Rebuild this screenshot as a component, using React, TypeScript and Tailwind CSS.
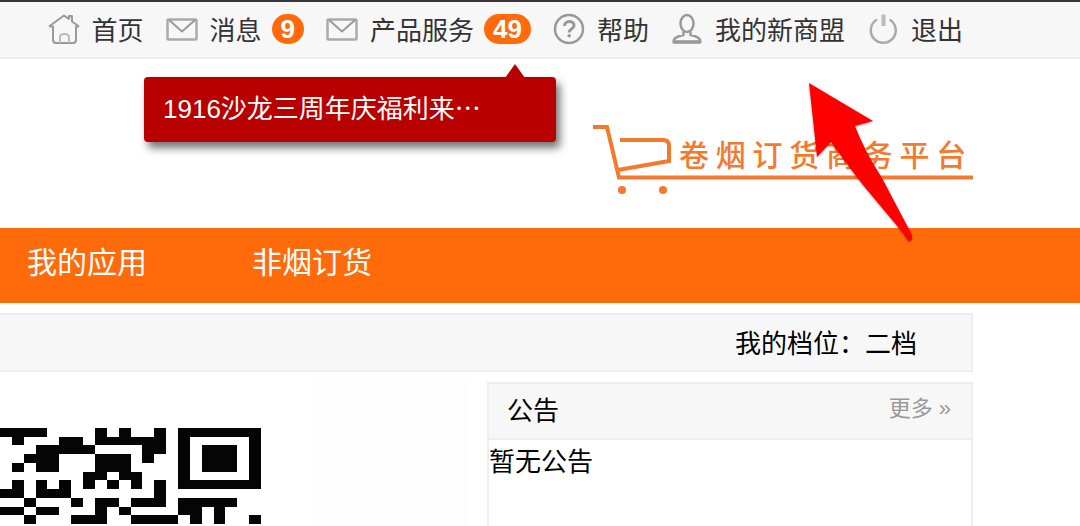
import React from 'react';

interface NavItem {
  label: string;
  icon: React.ReactNode;
  count?: number;
}

const HomeIcon: React.FC = () => (
  <svg className="w-8 h-8 shrink-0" viewBox="0 0 32 32" fill="none" stroke="#999" strokeWidth="2" strokeLinejoin="round" aria-hidden="true">
    <path d="M1 13.5 16 2.500l5 3.500V3h3v5.500l7 5" />
    <path d="M1.500 13.500H5V27q0 3 3 3h17q3 0 3-3V13.500h3" />
    <path d="M12 30v-6q0-3 4.500-3t4.500 3v6" stroke="#bbb" />
  </svg>
);

const MailIcon: React.FC = () => (
  <svg className="w-8 h-8 shrink-0" viewBox="0 0 32 32" fill="none" stroke="#999" strokeWidth="2" strokeLinejoin="round" aria-hidden="true">
    <rect x="1.5" y="6.5" width="29" height="20" rx="1" stroke="#aaa" strokeWidth="2.5" />
    <path d="M3 7l13 11.500L29 7" />
  </svg>
);

const HelpIcon: React.FC = () => (
  <svg className="w-8 h-8 shrink-0" viewBox="0 0 32 32" fill="none" stroke="#999" strokeWidth="2.5" aria-hidden="true">
    <circle cx="16" cy="16" r="14" />
    <path d="M11.500 13c0-6 9.500-6 9.500-.5 0 3.500-4.800 3-4.800 7" strokeWidth="3" />
    <circle cx="16.200" cy="22.800" r="1.800" fill="#999" stroke="none" />
  </svg>
);

const UserIcon: React.FC = () => (
  <svg className="w-8 h-8 shrink-0" viewBox="0 0 32 32" fill="none" stroke="#999" strokeWidth="2.5" strokeLinejoin="round" aria-hidden="true">
    <ellipse cx="16" cy="10.500" rx="6.5" ry="8.5" />
    <path d="M12.500 18.500v3.500C6 23 2.500 25 2.500 29h27C29.500 25 26 23 19.500 22v-3.500" />
    <path d="M2.500 29h27" strokeWidth="3.500" />
  </svg>
);

const PowerIcon: React.FC = () => (
  <svg className="w-8 h-8 shrink-0" viewBox="0 0 32 32" fill="none" stroke="#aaa" strokeWidth="2.5" aria-hidden="true">
    <path d="M10 6.500a12.500 12.500 0 1 0 12.500 0" />
    <path d="M16.500 1.500v11.500" stroke="#bbb" strokeWidth="4" />
  </svg>
);

const topNav: NavItem[] = [
  { label: '首页', icon: <HomeIcon /> },
  { label: '消息', icon: <MailIcon />, count: 9 },
  { label: '产品服务', icon: <MailIcon />, count: 49 },
  { label: '帮助', icon: <HelpIcon /> },
  { label: '我的新商盟', icon: <UserIcon /> },
  { label: '退出', icon: <PowerIcon /> },
];

const mainNav: string[] = ['我的应用', '非烟订货'];

const qrRows: string[] = [
  '####....#.#..#.#######',
  '.#...##.######.#.....#',
  '...#####....##.#.###.#',
  '..###...###.#..#.###.#',
  '.#.##...###....#.###.#',
  '.......##.##...#.....#',
  '.#.#.#.#.#.#.#.#######',
  '##.###.......#........',
  '..#...#.##.###.#####..',
  '##.##...#.#....##.#...',
  '..#...###..####.#.#..#',
];

const QrCode: React.FC = () => (
  <svg className="w-[261px] h-[96px]" viewBox="0 0 22 11" preserveAspectRatio="none" shapeRendering="crispEdges" role="img" aria-label="QR">
    {qrRows.map((row, y) =>
      row.split('').map((cell, x) => (cell === '#' ? <rect key={`${x}-${y}`} x={x} y={y} width="1" height="1" fill="#050505" /> : null))
    )}
  </svg>
);

const Logo: React.FC = () => (
  <div className="relative w-[380px] h-[72px]">
    <svg className="w-full h-full" viewBox="0 0 380 72" fill="none" stroke="#f37a2d" strokeWidth="4" aria-hidden="true">
      <path d="M0 3h14l12 50.500h354" />
      <path d="M27 16h43q6 0 6 6v15L25 46" />
      <circle cx="29" cy="66" r="4" fill="#f37a2d" stroke="none" />
      <circle cx="70" cy="66" r="4" fill="#f37a2d" stroke="none" />
    </svg>
    <span className="absolute left-[86px] top-[9px] text-[30px] leading-[40px] font-medium whitespace-nowrap text-[#f37a2d]">卷 烟 订 货 商 务 平 台</span>
  </div>
);

const App: React.FC = () => {
  return (
    <div className="relative flex min-h-screen flex-col overflow-hidden bg-white text-[26px] leading-[36px] text-black font-['Noto_Sans_CJK_SC',sans-serif]">
      <header className="border-t-2 border-b-2 border-t-[#3a3638] border-b-[#eee] bg-[#f7f7f7]">
        <nav className="flex justify-end gap-[22px] pt-[9px] pb-[10px] pr-[117px]">
          {topNav.map((item) => (
            <a key={item.label} href="#" className="flex items-center whitespace-nowrap text-[#333]">
              {item.icon}
              <span className="ml-3">{item.label}</span>
              {item.count && (
                <span className="ml-[10px] rounded-full bg-[#ff6b0b] px-[9px] text-[26px] leading-[30px] font-bold text-white font-['Liberation_Sans',sans-serif]">
                  {item.count}
                </span>
              )}
            </a>
          ))}
        </nav>
      </header>

      <div className="flex justify-end pt-[65px] pb-[32px] pr-[107px]">
        <Logo />
      </div>

      <nav className="flex gap-[105px] bg-[#ff6b0b] pt-[12px] pb-[23px] pl-[27px] text-[30px] leading-[40px] text-white">
        {mainNav.map((label) => (
          <a key={label} href="#">{label}</a>
        ))}
      </nav>

      <main className="flex flex-1 flex-col pt-[10px] pr-[107px]">
        <div className="border-2 border-l-0 border-[#eee] bg-[#f7f7f7] pt-[9px] pb-[10px] pr-[54px] text-right">
          我的档位：二档
        </div>
        <div className="mt-[10px] flex flex-1">
          <div className="mr-[19px] flex-1 bg-[#fdfdfd]">
            <div className="h-full w-[311px] bg-white pt-[46px]">
              <QrCode />
            </div>
          </div>
          <section className="w-[486px] border-2 border-b-0 border-[#eee]">
            <div className="flex items-center justify-between border-b-2 border-[#eee] bg-[#f7f7f7] pt-[7px] pb-[11px] pl-[18px] pr-[20px]">
              <h2>公告</h2>
              <a href="#" className="text-[22px] leading-[36px] text-[#999] font-['Liberation_Sans','Noto_Sans_CJK_SC',sans-serif]">更多 »</a>
            </div>
            <p className="pt-[2px]">暂无公告</p>
          </section>
        </div>
      </main>

      <a href="#" className="absolute left-[144px] top-[77px] w-[412px] rounded bg-[#b80000] pl-[19px] pt-[12px] pb-[16px] text-white shadow-[4px_6px_8px_rgba(0,0,0,0.55)]">
        <svg className="absolute right-[31px] -top-[13px] h-[14px] w-5" viewBox="0 0 20 14" aria-hidden="true">
          <path d="M10 0 20 14H0z" fill="#b80000" />
        </svg>
        <span className="block h-[37px]">
          <span className="font-['Liberation_Sans',sans-serif]">1916</span>沙龙三周年庆福利来…
        </span>
      </a>

      <svg className="absolute left-[800px] top-[76px] h-[172px] w-[124px] drop-shadow-[0_1px_1px_rgba(0,0,0,0.35)]" viewBox="0 0 124 172" aria-hidden="true">
        <path d="M9 7 73 45 55 50Q64 74 82 102L112 159Q113 165 109 165 107 164 103 157L63 109Q45 86 31 66L17 81z" fill="#f00" />
      </svg>
    </div>
  );
};

export default App;
